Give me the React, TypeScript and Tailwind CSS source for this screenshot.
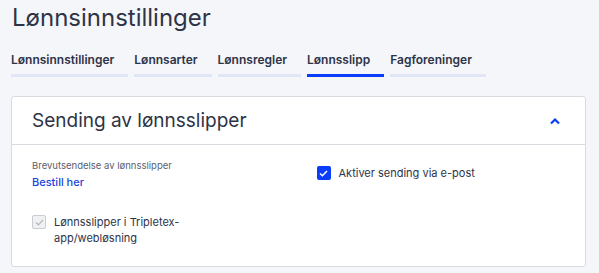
import React from "react";

const tabs = ["Lønnsinnstillinger", "Lønnsarter", "Lønnsregler", "Lønnsslipp", "Fagforeninger"];

export default function App() {
  return (
    <div
      className="min-h-screen bg-[#f5f6fa] text-[#2d3447]"
      style={{ fontFamily: "Inter, 'Noto Sans', sans-serif" }}
    >
      <div className="px-[11px] pt-[3px]">
        <h1 className="text-[24px] leading-[30px] font-normal pl-[1px]">Lønnsinnstillinger</h1>

        <div className="flex gap-[6px] mt-[19px]">
          {tabs.map((t) => (
            <div
              key={t}
              className={
                t === "Lønnsslipp"
                  ? "pr-[14px] pb-[7px] text-[12px] leading-[15px] font-semibold border-b-[3px] border-[#0a3dfa]"
                  : "pr-[14px] pb-[7px] text-[12px] leading-[15px] font-semibold border-b-[3px] border-[#e1e6f7]"
              }
            >
              {t}
            </div>
          ))}
        </div>

        <div className="mt-[19px] w-[575px] bg-white border border-[#d9dbe1] rounded-[3px]">
          <div className="flex items-center justify-between h-[48px] pl-[20px] pr-[24px] border-b border-[#d9dbe1]">
            <h2 className="text-[19px] leading-[24px] font-normal">Sending av lønnsslipper</h2>
            <svg width="12" height="8" viewBox="0 0 12 8" fill="none">
              <path d="M2 6.5 L6 2.5 L10 6.5" stroke="#0a3dfa" strokeWidth="2.2" />
            </svg>
          </div>

          <div className="grid grid-cols-2 gap-x-[36px] px-[20px] pt-[15px] pb-[20px]">
            <div>
              <div className="text-[9.5px] leading-[12px] text-[#5b6070]">Brevutsendelse av lønnsslipper</div>
              <a className="block text-[11px] leading-[15px] font-medium text-[#1b44d8] mt-[3px]">Bestill her</a>
              <label className="flex items-start gap-[8px] mt-[24px]">
                <span className="mt-[1px] w-[14px] h-[14px] shrink-0 rounded-[2px] border border-[#c9ccd3] bg-[#f0f1f3] flex items-center justify-center">
                  <svg width="9" height="7" viewBox="0 0 9 7" fill="none">
                    <path d="M1 3.5 L3.4 5.8 L8 1" stroke="#b5b8bf" strokeWidth="1.2" />
                  </svg>
                </span>
                <span className="text-[11px] leading-[16px] w-[130px]">Lønnsslipper i Tripletex-app/webløsning</span>
              </label>
            </div>
            <div>
              <label className="flex items-center gap-[8px] mt-[5px]">
                <span className="w-[14px] h-[14px] shrink-0 rounded-[2px] bg-[#0a3dfa] flex items-center justify-center">
                  <svg width="9" height="7" viewBox="0 0 9 7" fill="none">
                    <path d="M1 3.5 L3.4 5.8 L8 1" stroke="white" strokeWidth="1.5" />
                  </svg>
                </span>
                <span className="text-[11px] leading-[16px]">Aktiver sending via e-post</span>
              </label>
            </div>
          </div>
        </div>
      </div>
    </div>
  );
}
